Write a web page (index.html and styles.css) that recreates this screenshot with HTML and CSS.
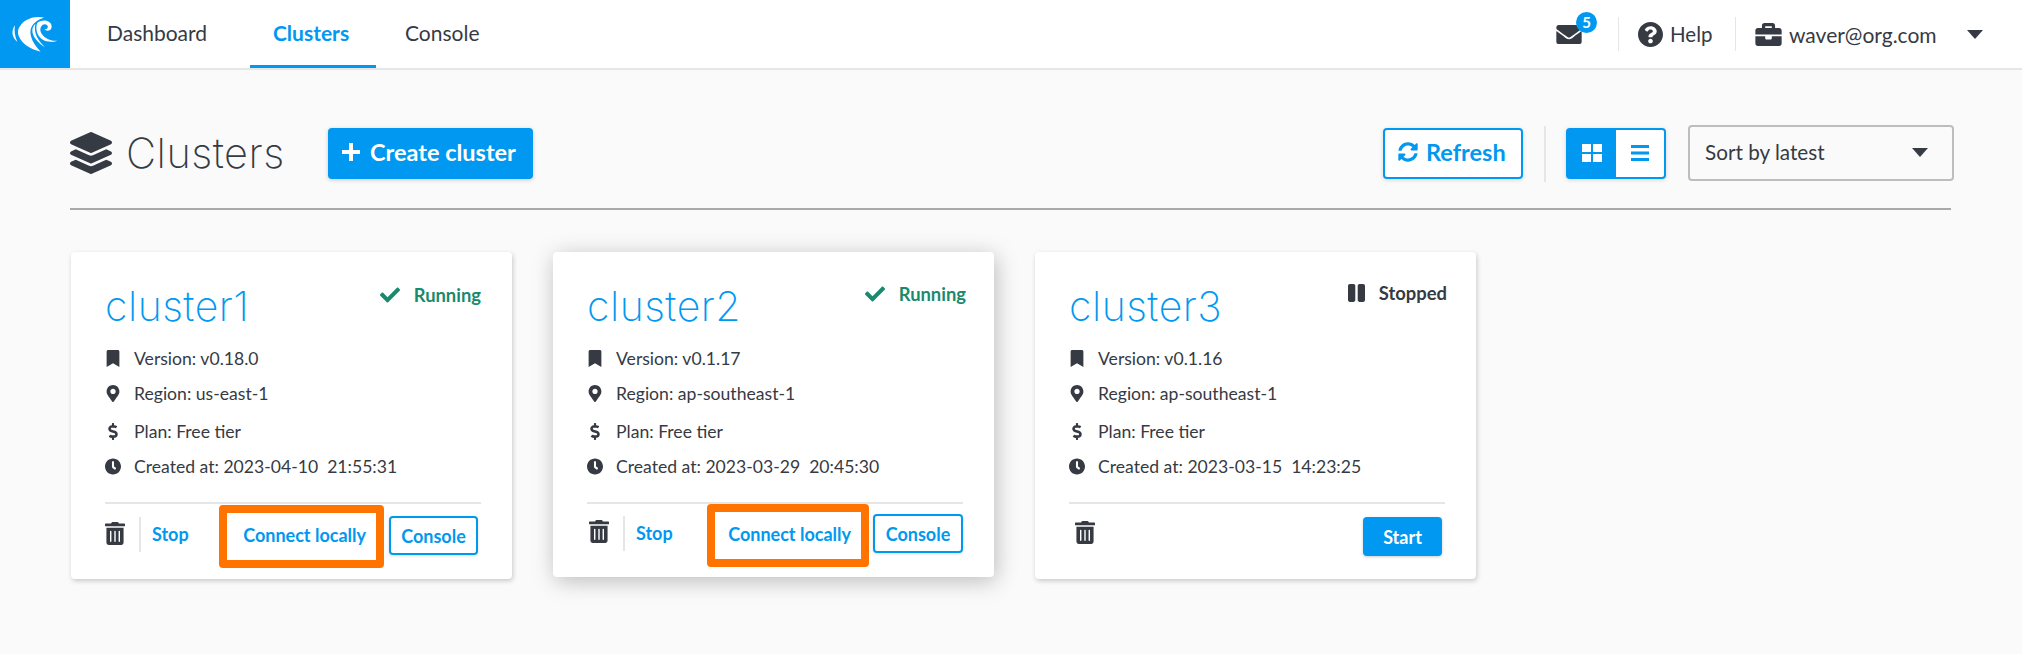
FILE: index.html
```html
<!DOCTYPE html>
<html>
<head>
<title>Clusters</title>
<meta charset="utf-8">
<link rel="stylesheet" href="styles.css">
</head>
<body>

<svg class="icon-defs" xmlns="http://www.w3.org/2000/svg">
    <symbol id="i-check" viewBox="0 0 512 512"><path d="M173.898 439.404l-166.4-166.4c-9.997-9.997-9.997-26.206 0-36.204l36.203-36.204c9.997-9.998 26.207-9.998 36.204 0L192 312.69 432.095 72.596c9.997-9.997 26.207-9.997 36.204 0l36.203 36.204c9.997 9.997 9.997 26.206 0 36.204l-294.4 294.401c-9.998 9.997-26.207 9.997-36.204-.001z"/></symbol>
    <symbol id="i-pause" viewBox="0 31 448 448" preserveAspectRatio="none"><path d="M144 479H48c-26.5 0-48-21.5-48-48V79c0-26.5 21.5-48 48-48h96c26.5 0 48 21.5 48 48v352c0 26.5-21.5 48-48 48zm304-48V79c0-26.5-21.5-48-48-48h-96c-26.5 0-48 21.5-48 48v352c0 26.5 21.5 48 48 48h96c26.5 0 48-21.5 48-48z"/></symbol>
    <symbol id="i-bookmark" viewBox="0 0 384 512"><path d="M0 512V48C0 21.49 21.49 0 48 0h288c26.51 0 48 21.49 48 48v464L192 400 0 512z"/></symbol>
    <symbol id="i-marker" viewBox="0 0 384 512"><path d="M172.268 501.67C26.97 291.031 0 269.413 0 192 0 85.961 85.961 0 192 0s192 85.961 192 192c0 77.413-26.97 99.031-172.268 309.67-9.535 13.774-29.93 13.773-39.464 0zM192 272c44.183 0 80-35.817 80-80s-35.817-80-80-80-80 35.817-80 80 35.817 80 80 80z"/></symbol>
    <symbol id="i-dollar" viewBox="0 0 288 512"><path d="M209.2 233.4l-108-31.6C88.7 198.2 80 186.5 80 173.5c0-16.3 13.2-29.5 29.5-29.5h66.3c12.2 0 24.2 3.7 34.2 10.5 6.1 4.1 14.3 3.1 19.5-2l34.8-34c7.1-6.9 6.1-18.4-1.8-24.5C238 74.8 207.4 64.1 176 64V16c0-8.8-7.2-16-16-16h-32c-8.8 0-16 7.2-16 16v48h-2.5C45.8 64-5.4 118.7.5 183.6c4.2 46.1 39.4 83.6 83.8 96.6l102.5 30c12.5 3.7 21.2 15.3 21.2 28.3 0 16.3-13.2 29.5-29.5 29.5h-66.3C100 368 88 364.3 78 357.5c-6.1-4.1-14.3-3.1-19.5 2l-34.8 34c-7.1 6.9-6.1 18.4 1.8 24.5 24.5 19.2 55.1 29.9 86.5 30v48c0 8.8 7.2 16 16 16h32c8.8 0 16-7.2 16-16v-48.2c46.6-.9 90.3-28.6 105.7-72.7 21.5-61.6-14.6-124.8-72.5-141.7z"/></symbol>
    <symbol id="i-clock" viewBox="8 8 496 496"><path d="M256,8C119,8,8,119,8,256S119,504,256,504,504,393,504,256,393,8,256,8Zm92.49,313h0l-20,25a16,16,0,0,1-22.49,2.5h0l-67-49.72a40,40,0,0,1-15-31.23V112a16,16,0,0,1,16-16h32a16,16,0,0,1,16,16V256l58,42.5A16,16,0,0,1,348.49,321Z"/></symbol>
    <symbol id="i-trash" viewBox="0 0 448 512"><path d="M32 464a48 48 0 0 0 48 48h288a48 48 0 0 0 48-48V128H32zm272-256a16 16 0 0 1 32 0v224a16 16 0 0 1-32 0zm-96 0a16 16 0 0 1 32 0v224a16 16 0 0 1-32 0zm-96 0a16 16 0 0 1 32 0v224a16 16 0 0 1-32 0zM432 32H312l-9.4-18.7A24 24 0 0 0 281.1 0H166.8a23.72 23.72 0 0 0-21.4 13.3L136 32H16A16 16 0 0 0 0 48v32a16 16 0 0 0 16 16h416a16 16 0 0 0 16-16V48a16 16 0 0 0-16-16z"/></symbol>
    <symbol id="i-caret" viewBox="0 0 16 9"><path d="M0 0h16L8 9z"/></symbol>
</svg>

<header class="topbar">
    <a class="logo">
        <svg viewBox="0 0 210 204" width="70" height="68">
            <path d="M45 76C33 92 35 112 52 126 44 108 42 92 45 76Z"/>
            <path d="M133 53C100 45 65 60 55 88 48 112 75 145 122 155 102 135 88 110 92 88 96 72 112 58 133 53Z"/>
            <path d="M106 72C92 85 90 112 135 142 115 122 100 100 106 72Z"/>
            <path d="M112 68C130 55 155 62 155 80 155 92 140 96 133 88 143 88 147 80 140 74 130 68 118 80 122 95 127 110 150 125 172 122 145 132 120 120 112 100 108 88 108 76 112 68Z"/>
        </svg>
    </a>
    <nav class="tabs">
        <a class="tab">Dashboard</a>
        <a class="tab tab-active">Clusters</a>
        <a class="tab">Console</a>
    </nav>
    <div class="usermenu">
        <div class="mail">
            <svg class="mail-icon" viewBox="0 64 512 384"><path d="M502.3 190.8c3.9-3.1 9.7-.2 9.7 4.7V400c0 26.5-21.5 48-48 48H48c-26.5 0-48-21.5-48-48V195.6c0-5 5.7-7.8 9.7-4.7 22.4 17.4 52.1 39.5 154.1 113.6 21.1 15.4 56.7 47.8 92.2 47.6 35.7.3 72-32.8 92.3-47.6 102-74.1 131.6-96.3 154-113.7zM256 320c23.2.4 56.6-29.2 73.4-41.4 132.7-96.3 142.8-104.7 173.4-128.7 5.8-4.5 9.2-11.5 9.2-18.9v-19c0-26.5-21.5-48-48-48H48C21.5 64 0 85.5 0 112v19c0 7.4 3.4 14.3 9.2 18.9 30.6 23.9 40.7 32.4 173.4 128.7 16.8 12.2 50.2 41.8 73.4 41.4z"/></svg>
            <span class="badge">5</span>
        </div>
        <div class="help">
            <svg class="help-icon" viewBox="8 8 496 496"><path d="M504 256c0 136.997-111.043 248-248 248S8 392.997 8 256C8 119.083 119.043 8 256 8s248 111.083 248 248zM262.655 90c-54.497 0-89.255 22.957-116.549 63.758-3.536 5.286-2.353 12.415 2.715 16.258l34.699 26.31c5.205 3.947 12.621 3.008 16.665-2.122 17.864-22.658 30.113-35.797 57.303-35.797 20.429 0 45.698 13.148 45.698 32.958 0 14.976-12.363 22.667-32.534 33.976C247.128 238.528 216 254.941 216 296v4c0 6.627 5.373 12 12 12h56c6.627 0 12-5.373 12-12v-1.333c0-28.462 83.186-29.647 83.186-106.667 0-58.002-60.165-102-116.531-102zM256 338c-25.365 0-46 20.635-46 46 0 25.364 20.635 46 46 46s46-20.636 46-46c0-25.365-20.635-46-46-46z"/></svg>
            <span class="help-text">Help</span>
        </div>
        <div class="account">
            <svg class="case-icon" viewBox="0 32 512 448"><path d="M320 336c0 8.84-7.16 16-16 16h-96c-8.84 0-16-7.16-16-16v-48H0v144c0 25.6 22.4 48 48 48h416c25.6 0 48-22.4 48-48V288H320v48zm144-208h-80V80c0-25.6-22.4-48-48-48H176c-25.6 0-48 22.4-48 48v48H48c-25.6 0-48 22.4-48 48v80h512v-80c0-25.6-22.4-48-48-48zm-144 0H192V96h128v32z"/></svg>
            <span class="email">waver@org.com</span>
            <svg class="caret-icon"><use href="#i-caret"/></svg>
        </div>
    </div>
</header>

<main class="page">

    <div class="toolbar">
        <svg class="title-icon" viewBox="0 0 512 512"><path d="M12.41 148.02l232.94 105.67c6.8 3.09 14.49 3.09 21.29 0l232.94-105.67c16.55-7.51 16.55-32.52 0-40.03L266.65 2.31a25.607 25.607 0 0 0-21.29 0L12.41 107.98c-16.55 7.51-16.55 32.53 0 40.04zm487.18 88.28l-58.09-26.33-161.64 73.27c-7.56 3.43-15.59 5.17-23.86 5.17s-16.29-1.74-23.86-5.17L70.51 209.97l-58.1 26.33c-16.55 7.5-16.55 32.5 0 40l232.94 105.59c6.8 3.08 14.49 3.08 21.29 0L499.59 276.3c16.55-7.5 16.55-32.5 0-40zm0 127.8l-57.87-26.23-161.86 73.37c-7.56 3.43-15.59 5.17-23.86 5.17s-16.29-1.74-23.86-5.17L70.29 337.87 12.41 364.1c-16.55 7.5-16.55 32.5 0 40l232.94 105.59c6.8 3.08 14.49 3.08 21.29 0L499.59 404.1c16.55-7.5 16.55-32.5 0-40z"/></svg>
        <h1 class="title">Clusters</h1>
        <a class="btn-create">
            <svg class="plus-icon" viewBox="0 0 18 18"><path d="M7 0h4v7h7v4h-7v7H7v-7H0V7h7z"/></svg>
            Create cluster
        </a>
        <a class="btn-refresh">
            <svg class="sync-icon" viewBox="0 0 512 512"><path d="M370.72 133.28C339.458 104.008 298.888 87.962 255.848 88c-77.458.068-144.328 53.178-162.791 126.85-1.344 5.363-6.122 9.15-11.651 9.15H24.103c-7.498 0-13.194-6.807-11.807-14.176C33.933 94.924 134.813 8 256 8c66.448 0 126.791 26.136 171.315 68.685L463.03 40.97C478.149 25.851 504 36.559 504 57.941V192c0 13.255-10.745 24-24 24H345.941c-21.382 0-32.09-25.851-16.971-40.971l41.75-41.749zM32 296h134.059c21.382 0 32.09 25.851 16.971 40.971l-41.75 41.75c31.262 29.273 71.835 45.319 114.876 45.28 77.418-.07 144.315-53.144 162.787-126.849 1.344-5.363 6.122-9.15 11.651-9.15h57.304c7.498 0 13.194 6.807 11.807 14.176C478.067 417.076 377.187 504 256 504c-66.448 0-126.791-26.136-171.315-68.685L48.97 471.03C33.851 486.149 8 475.441 8 454.059V320c0-13.255 10.745-24 24-24z"/></svg>
            Refresh
        </a>
        <div class="view-toggle">
            <a class="view-btn view-btn-on">
                <svg class="grid-icon" viewBox="0 0 20 20" preserveAspectRatio="none"><path d="M0 0h9v9H0zM11 0h9v9h-9zM0 11h9v9H0zM11 11h9v9h-9z"/></svg>
            </a>
            <a class="view-btn">
                <svg class="list-icon" viewBox="0 0 18 16"><path d="M0 0h18v3H0zM0 6.5h18v3H0zM0 13h18v3H0z"/></svg>
            </a>
        </div>
        <div class="sort-select">
            <span>Sort by latest</span>
            <svg class="caret-icon"><use href="#i-caret"/></svg>
        </div>
    </div>

    <div class="cards">

        <section class="card">
            <div class="card-head">
                <h2 class="card-name">cluster1</h2>
                <div class="status status-running">
                    <svg class="status-icon"><use href="#i-check"/></svg>
                    <span>Running</span>
                </div>
            </div>
            <ul class="info">
                <li><svg class="info-icon"><use href="#i-bookmark"/></svg>Version: v0.18.0</li>
                <li><svg class="info-icon"><use href="#i-marker"/></svg>Region: us-east-1</li>
                <li class="info-plan"><svg class="info-icon"><use href="#i-dollar"/></svg>Plan: Free tier</li>
                <li><svg class="info-icon"><use href="#i-clock"/></svg>Created at: 2023-04-10&nbsp; 21:55:31</li>
            </ul>
            <div class="card-foot">
                <svg class="trash-icon"><use href="#i-trash"/></svg>
                <a class="stop">Stop</a>
                <a class="connect">Connect locally</a>
                <a class="btn-console">Console</a>
            </div>
        </section>

        <section class="card card-hover">
            <div class="card-head">
                <h2 class="card-name">cluster2</h2>
                <div class="status status-running">
                    <svg class="status-icon"><use href="#i-check"/></svg>
                    <span>Running</span>
                </div>
            </div>
            <ul class="info">
                <li><svg class="info-icon"><use href="#i-bookmark"/></svg>Version: v0.1.17</li>
                <li><svg class="info-icon"><use href="#i-marker"/></svg>Region: ap-southeast-1</li>
                <li class="info-plan"><svg class="info-icon"><use href="#i-dollar"/></svg>Plan: Free tier</li>
                <li><svg class="info-icon"><use href="#i-clock"/></svg>Created at: 2023-03-29&nbsp; 20:45:30</li>
            </ul>
            <div class="card-foot">
                <svg class="trash-icon"><use href="#i-trash"/></svg>
                <a class="stop">Stop</a>
                <a class="connect">Connect locally</a>
                <a class="btn-console">Console</a>
            </div>
        </section>

        <section class="card card-stopped">
            <div class="card-head">
                <h2 class="card-name">cluster3</h2>
                <div class="status">
                    <svg class="status-icon pause-icon"><use href="#i-pause"/></svg>
                    <span>Stopped</span>
                </div>
            </div>
            <ul class="info">
                <li><svg class="info-icon"><use href="#i-bookmark"/></svg>Version: v0.1.16</li>
                <li><svg class="info-icon"><use href="#i-marker"/></svg>Region: ap-southeast-1</li>
                <li class="info-plan"><svg class="info-icon"><use href="#i-dollar"/></svg>Plan: Free tier</li>
                <li><svg class="info-icon"><use href="#i-clock"/></svg>Created at: 2023-03-15&nbsp; 14:23:25</li>
            </ul>
            <div class="card-foot">
                <svg class="trash-icon"><use href="#i-trash"/></svg>
                <a class="btn-start">Start</a>
            </div>
        </section>

    </div>
</main>

</body>
</html>
```

FILE: styles.css
```css
body {
    margin: 0;
    background-color: #fafafa;
    color: #363a43;
    font-family: Lato, "Noto Sans", sans-serif;
    height: 654px;
    overflow: hidden;
}

svg { fill: currentColor; display: block; flex: none; }
.icon-defs { display: none; }

/* top bar */
.topbar {
    display: flex;
    height: 68px;
    background-color: white;
    border-bottom: 2px solid #e6e6e6;
}

.logo {
    width: 70px;
    height: 68px;
    background-color: #0098f0;
    color: white;
}

.tabs {
    display: flex;
    margin-left: 15px;
    font-size: 21px;
}

.tab {
    display: flex;
    align-items: center;
    box-sizing: border-box;
    height: 68px;
    padding: 0 22px;
    border-bottom: 3px solid transparent;
}

.tab-active {
    justify-content: center;
    width: 126px;
    padding: 0 4px 0 0;
    margin: 0 7px 0 21px;
    color: #0098f0;
    font-weight: 700;
    border-bottom-color: #0098f0;
}

.usermenu {
    display: flex;
    align-items: center;
    margin-left: auto;
    padding-right: 39px;
    font-size: 20.5px;
}

.mail {
    position: relative;
    padding-right: 36px;
    border-right: 1px solid #e6e6e6;
    height: 34px;
    display: flex;
    align-items: center;
}
.mail-icon { width: 26px; height: 19px; }

.badge {
    position: absolute;
    left: 20px;
    top: -5px;
    width: 21px;
    height: 21px;
    border-radius: 50%;
    background-color: #0098f0;
    color: white;
    font-size: 15px;
    font-weight: 700;
    text-align: center;
    line-height: 21px;
}

.help {
    display: flex;
    align-items: center;
    height: 34px;
    padding: 0 23px 0 19px;
    border-right: 1px solid #e6e6e6;
}
.help-icon { width: 25px; height: 25px; margin-right: 7px; }
.help-text { width: 42px; }

.account {
    display: flex;
    align-items: center;
    padding-left: 19px;
}
.case-icon { width: 27px; height: 23px; margin-right: 7px; }
.email { width: 178px; font-size: 21px; }
.caret-icon { width: 16px; height: 9px; }

/* title row */
.page {
    padding: 55px 71px 0 70px;
}

.toolbar {
    display: flex;
    align-items: center;
    height: 56px;
    padding-bottom: 27px;
    border-bottom: 2px solid #a9a9a9;
}

.title-icon { width: 42px; height: 42px; }

.title {
    margin: 0 0 0 14px;
    font-family: Inter, Lato, sans-serif;
    font-size: 41.5px;
    font-weight: 200;
    letter-spacing: 0.5px;
    width: 202px;
}

.btn-create {
    display: flex;
    align-items: center;
    gap: 10px;
    box-sizing: border-box;
    width: 205px;
    height: 51px;
    padding: 0 0 2px 14px;
    border-radius: 4px;
    background-color: #0098f0;
    color: white;
    font-size: 23.5px;
    font-weight: 700;
    box-shadow: 0 1px 4px rgba(0, 0, 0, 0.2);
}
.plus-icon { width: 18px; height: 18px; }

.btn-refresh {
    display: flex;
    align-items: center;
    gap: 8px;
    box-sizing: border-box;
    width: 140px;
    height: 51px;
    margin-left: auto;
    padding: 0 0 2px 13px;
    border: 2px solid #0098f0;
    border-radius: 4px;
    background-color: white;
    color: #0098f0;
    font-size: 23.5px;
    font-weight: 700;
    box-shadow: 0 1px 4px rgba(0, 0, 0, 0.15);
}
.sync-icon { width: 20px; height: 20px; }

.view-toggle {
    display: flex;
    margin-left: 43px;
    position: relative;
    box-sizing: border-box;
    width: 100px;
    height: 51px;
    border: 2px solid #0098f0;
    border-radius: 4px;
    background-color: white;
    box-shadow: 0 1px 4px rgba(0, 0, 0, 0.15);
}

.view-toggle::before {
    content: "";
    position: absolute;
    left: -24px;
    top: -4px;
    height: 56px;
    border-left: 2px solid #e6e6e6;
}

.view-btn {
    display: flex;
    align-items: center;
    justify-content: center;
    flex: 1;
    color: #0098f0;
}
.view-btn-on { background-color: #0098f0; color: white; }
.grid-icon { width: 20px; height: 18px; }
.list-icon { width: 18px; height: 16px; }

.sort-select {
    display: flex;
    align-items: center;
    justify-content: space-between;
    box-sizing: border-box;
    width: 266px;
    height: 56px;
    margin: 0 -3px 0 22px;
    padding: 0 24px 2px 15px;
    border: 2px solid #bdbdbd;
    border-radius: 4px;
    font-size: 20.7px;
}

/* cards */
.cards {
    display: grid;
    grid-template-columns: repeat(3, 441px);
    gap: 41px;
    align-items: start;
    margin: 42px 0 0 1px;
}

.card {
    box-sizing: border-box;
    height: 327px;
    padding: 0 31px 0 34px;
    border-radius: 4px;
    background-color: white;
    box-shadow: 1px 2px 5px rgba(0, 0, 0, 0.2);
}

.card-hover {
    height: 325px;
    box-shadow: 2px 4px 22px rgba(0, 0, 0, 0.25);
}

.card-head {
    display: flex;
    justify-content: space-between;
    height: 89px;
    padding-top: 26px;
    box-sizing: border-box;
}

.card-name {
    margin: 0;
    font-family: Inter, Lato, sans-serif;
    font-size: 41px;
    line-height: 56px;
    font-weight: 200;
    letter-spacing: 0.5px;
    color: #0098f0;
}

.status {
    display: flex;
    align-items: center;
    height: 20px;
    margin-top: 7px;
    font-size: 18.4px;
    font-weight: 700;
}
.status-running { color: #1a8a6e; }
.status-icon { width: 20px; height: 20px; margin-right: 14px; }
.pause-icon { width: 17px; height: 18px; }

.info {
    list-style: none;
    margin: 0;
    padding: 0;
    font-size: 17.6px;
}

.info li {
    display: flex;
    align-items: center;
    height: 35px;
}

.info-icon { width: 16px; height: 17px; margin-right: 13px; }
.info .info-plan { margin-top: 3px; }

.card-foot {
    display: flex;
    align-items: flex-start;
    box-sizing: border-box;
    width: 376px;
    height: 65px;
    margin-top: 18px;
    padding: 1px 3px 0 0;
    border-top: 2px solid #e6e6e6;
    font-size: 18px;
    font-weight: 700;
    color: #0098f0;
}

.trash-icon {
    width: 20px;
    height: 23px;
    margin-top: 17px;
    color: #363a43;
}

.stop {
    height: 35px;
    margin: 12px 0 0 14px;
    padding-left: 11px;
    border-left: 2px solid #e6e6e6;
    line-height: 35px;
}

.connect {
    box-sizing: border-box;
    display: flex;
    align-items: center;
    justify-content: flex-end;
    width: 165px;
    height: 63px;
    margin-left: auto;
    padding: 0 10px 3px 0;
    border: 8px solid #ff7300;
    border-radius: 4px;
}

.btn-console {
    box-sizing: border-box;
    display: flex;
    align-items: center;
    justify-content: center;
    width: 89px;
    height: 39px;
    margin: 11px 0 0 5px;
    border: 2px solid #0098f0;
    border-radius: 4px;
    box-shadow: 0 1px 3px rgba(0, 0, 0, 0.15);
}

.btn-start {
    display: flex;
    align-items: center;
    justify-content: center;
    width: 79px;
    height: 39px;
    margin: 12px 0 0 auto;
    border-radius: 4px;
    background-color: #0098f0;
    color: white;
    box-shadow: 0 1px 3px rgba(0, 0, 0, 0.2);
}

.card-hover .status { margin-top: 6px; margin-right: -3px; }
.card-hover .card-foot { height: 63px; padding-right: 0; }
.card-hover .trash-icon { margin: 15px 0 0 2px; }
.card-hover .stop { margin-top: 11px; }
.card-hover .connect { width: 162px; margin-top: -1px; }
.card-hover .btn-console { width: 90px; margin: 9px 0 0 4px; }
.card-stopped .status { margin-top: 5px; margin-right: -2px; }
.card-stopped .trash-icon { margin: 16px 0 0 6px; }
```
